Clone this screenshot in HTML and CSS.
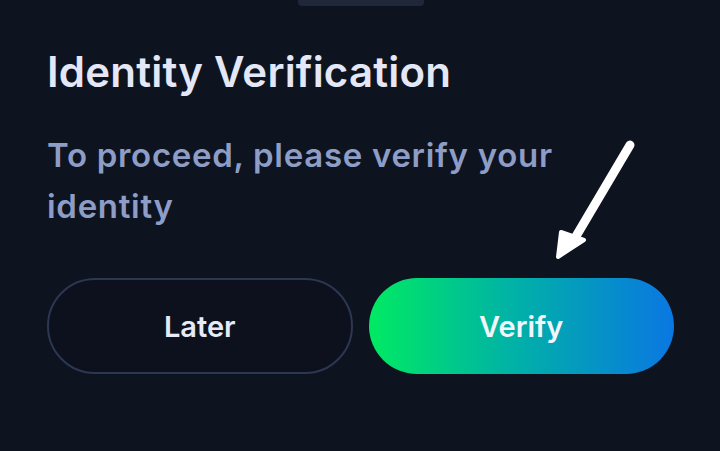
FILE: index.html
```html
<!DOCTYPE html>
<html>
<head>
<meta charset="utf-8">
<link rel="stylesheet" href="styles.css">
</head>
<body>
<div class="sheet">
  <div class="handle"></div>
  <h1 class="title">Identity Verification</h1>
  <p class="subtitle">To proceed, please verify your identity</p>
  <div class="actions">
    <button class="btn btn-later">Later</button>
    <button class="btn btn-verify">Verify</button>
  </div>
  <svg class="arrow" width="100" height="130" viewBox="0 0 100 130">
    <path d="M80 15 L25 108" stroke="#ffffff" stroke-width="9" stroke-linecap="round" fill="none"/>
    <path d="M8 127 L11 102 L34 110 Z" fill="#ffffff" stroke="#ffffff" stroke-width="4" stroke-linejoin="round"/>
  </svg>
</div>
</body>
</html>
```
FILE: styles.css
```css
* { box-sizing: border-box; }
html, body {
  margin: 0;
  padding: 0;
  background: #0e1320;
}
body {
  width: 720px;
  height: 451px;
  overflow: hidden;
  font-family: Inter, "Noto Sans", sans-serif;
}
.sheet {
  position: relative;
  display: flex;
  flex-direction: column;
  padding: 0 46px 0 47px;
  height: 451px;
}
.handle {
  align-self: center;
  width: 126px;
  height: 7px;
  margin-top: -1px;
  border-radius: 0 0 4px 4px;
  background: #1f2738;
}
.title {
  margin: 38px 0 0 0;
  font-size: 42px;
  line-height: 56px;
  font-weight: 600;
  color: #e3e7f6;
  letter-spacing: 0.2px;
}
.subtitle {
  margin: 30px 0 0 0;
  width: 580px;
  font-size: 33px;
  line-height: 51px;
  font-weight: 600;
  letter-spacing: 0.7px;
  color: #8d9dc6;
}
.actions {
  display: flex;
  gap: 16px;
  margin-top: 46px;
}
.btn {
  width: 306px;
  height: 96px;
  border-radius: 48px;
  font-family: Inter, "Noto Sans", sans-serif;
  font-size: 29px;
  font-weight: 600;
  color: #e6eaf6;
  cursor: pointer;
}
.btn-later {
  background: #0c111d;
  border: 2px solid #2c3752;
}
.btn-verify {
  border: none;
  background: linear-gradient(90deg, #00ea63 0%, #00b4a4 45%, #0a77e2 100%);
  color: #f2f6fb;
}
.arrow {
  position: absolute;
  left: 550px;
  top: 130px;
}
```
